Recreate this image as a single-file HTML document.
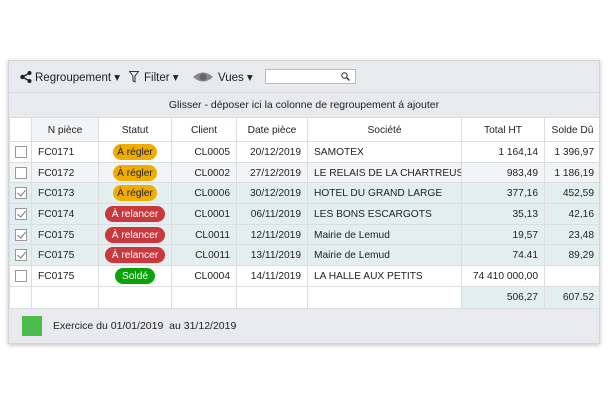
<!DOCTYPE html>
<html><head><meta charset="utf-8"><style>
*{margin:0;padding:0;box-sizing:border-box}
body{width:608px;height:405px;background:#fff;font-family:"Liberation Sans",sans-serif;font-size:11px;color:#222;position:relative;overflow:hidden}
#p{position:absolute;left:8px;top:60px;width:592px;height:284px;background:#e9eaee;border:1px solid #d3d5d9;box-shadow:0 1px 4px rgba(0,0,0,.25);overflow:hidden}
.tb{position:absolute;top:0;left:0;right:0;height:32px;border-bottom:1px solid #d8dadf}
.tb span{position:absolute;top:9px;font-size:11.5px}
.gb{position:absolute;top:32px;left:0;right:0;height:24px;text-align:center;line-height:24px;font-size:10.5px}
table{position:absolute;left:0;top:56px;width:591px;border-collapse:collapse;table-layout:fixed;background:#fff}
td{border:1px solid #dcdde0;height:20.7px;padding:2px 6px 0;white-space:nowrap;overflow:hidden;font-size:10.2px;line-height:12px;vertical-align:middle}
tr.h td{height:24px;text-align:center}
.g{background:#f3f4f6}.t td{background:#e2efee}
.r{text-align:right}.c{text-align:center;padding:0}
.cb{display:block;width:12px;height:12px;border:1px solid #999;background:#fff;position:relative;margin:-2px 0 0 -1px}
.cb.k:after{content:"";position:absolute;left:3px;top:0px;width:4px;height:7px;border:solid #777;border-width:0 1px 1px 0;transform:rotate(40deg)}
.b{display:inline-block;vertical-align:middle;border-radius:8px;padding:2px 4px 0;height:16px;line-height:14px;font-size:10.2px}
.y{background:#f0ad00;color:#222}.rd{background:#c9373f;color:#fff;padding:2px 7px 0}.gr{background:#0aa30a;color:#fff;padding:2px 7px 0}
</style></head><body>
<div id="p">
<div class="tb">
<svg style="position:absolute;left:11px;top:10px" width="12" height="12" viewBox="0 0 12 12"><circle cx="2.5" cy="6" r="2.2" fill="#222"/><circle cx="9.5" cy="2" r="2" fill="#222"/><circle cx="9.5" cy="10" r="2" fill="#222"/><path d="M2.5 6L9.5 2M2.5 6L9.5 10" stroke="#222" stroke-width="1.3"/></svg>
<span style="left:26px">Regroupement ▾</span>
<svg style="position:absolute;left:120px;top:10px" width="10" height="12" viewBox="0 0 10 12"><path d="M0.5 0.5H9.5L6 5V11L4 10V5Z" fill="none" stroke="#333"/></svg>
<span style="left:135px">Filter ▾</span>
<svg style="position:absolute;left:183px;top:10px" width="22" height="12" viewBox="0 0 22 12"><path d="M1 6Q11 -3 21 6Q11 15 1 6Z" fill="#888"/><circle cx="11" cy="6" r="3.5" fill="#666"/></svg>
<span style="left:209px">Vues ▾</span>
<div style="position:absolute;left:256px;top:8px;width:91px;height:15px;background:#fff;border:1px solid #b8babe"><svg style="position:absolute;right:5px;top:2px" width="9" height="9" viewBox="0 0 9 9"><circle cx="3.5" cy="3.5" r="2.7" fill="none" stroke="#333"/><path d="M5.5 5.5L8.5 8.5" stroke="#333" stroke-width="1.3"/></svg></div>
</div>
<div class="gb">Glisser - déposer ici la colonne de regroupement á ajouter</div>
<table>
<colgroup><col style="width:22px"><col style="width:67px"><col style="width:73px"><col style="width:65px"><col style="width:71px"><col style="width:154px"><col style="width:83px"><col style="width:56px"></colgroup>
<tr class="h"><td></td><td class="g">N pièce</td><td>Statut</td><td>Client</td><td>Date pièce</td><td>Société</td><td>Total HT</td><td>Solde Dû</td></tr>
<tr><td><span class="cb"></span></td><td>FC0171</td><td class="c"><span class="b y">À régler</span></td><td class="r">CL0005</td><td class="r">20/12/2019</td><td>SAMOTEX</td><td class="r">1 164,14</td><td class="r">1 396,97</td></tr>
<tr class="g"><td class="g"><span class="cb"></span></td><td>FC0172</td><td class="c"><span class="b y">À régler</span></td><td class="r">CL0002</td><td class="r">27/12/2019</td><td>LE RELAIS DE LA CHARTREUS</td><td class="r">983,49</td><td class="r">1 186,19</td></tr>
<tr class="t"><td><span class="cb k"></span></td><td>FC0173</td><td class="c"><span class="b y">À régler</span></td><td class="r">CL0006</td><td class="r">30/12/2019</td><td>HOTEL DU GRAND LARGE</td><td class="r">377,16</td><td class="r">452,59</td></tr>
<tr class="t"><td><span class="cb k"></span></td><td>FC0174</td><td class="c"><span class="b rd">À relancer</span></td><td class="r">CL0001</td><td class="r">06/11/2019</td><td>LES BONS ESCARGOTS</td><td class="r">35,13</td><td class="r">42,16</td></tr>
<tr class="t"><td><span class="cb k"></span></td><td>FC0175</td><td class="c"><span class="b rd">À relancer</span></td><td class="r">CL0011</td><td class="r">12/11/2019</td><td>Mairie de Lemud</td><td class="r">19,57</td><td class="r">23,48</td></tr>
<tr class="t"><td><span class="cb k"></span></td><td>FC0175</td><td class="c"><span class="b rd">À relancer</span></td><td class="r">CL0011</td><td class="r">13/11/2019</td><td>Mairie de Lemud</td><td class="r">74.41</td><td class="r">89,29</td></tr>
<tr><td><span class="cb"></span></td><td>FC0175</td><td class="c"><span class="b gr">Soldé</span></td><td class="r">CL0004</td><td class="r">14/11/2019</td><td>LA HALLE AUX PETITS</td><td class="r">74 410 000,00</td><td></td></tr>
<tr><td style="height:22px"></td><td></td><td></td><td></td><td></td><td></td><td class="r" style="background:#e2efee">506,27</td><td class="r" style="background:#e2efee">607.52</td></tr>
</table>
<div style="position:absolute;left:13px;top:255px;width:20px;height:20px;background:#4cbb4c"></div>
<div style="position:absolute;left:44px;top:259px;font-size:10.5px">Exercice du 01/01/2019&nbsp; au 31/12/2019</div>
</div>
</body></html>
